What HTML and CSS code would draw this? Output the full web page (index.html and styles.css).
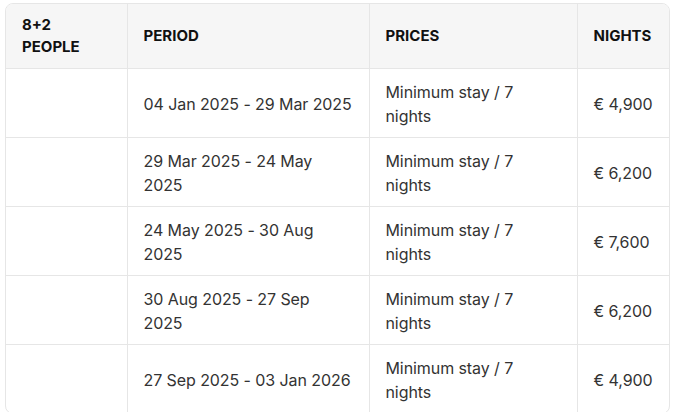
FILE: index.html
```html
<!DOCTYPE html>
<html lang="en">
<head>
<meta charset="utf-8">
<link rel="stylesheet" href="styles.css">
</head>
<body>
<div class="wrap">
<table class="rates">
<colgroup>
<col class="c1"><col class="c2"><col class="c3"><col class="c4">
</colgroup>
<thead>
<tr>
<th>8+2<br>PEOPLE</th>
<th>PERIOD</th>
<th>PRICES</th>
<th>NIGHTS</th>
</tr>
</thead>
<tbody>
<tr><td></td><td>04 Jan 2025 - 29 Mar 2025</td><td>Minimum stay / 7 nights</td><td class="price">€ 4,900</td></tr>
<tr><td></td><td>29 Mar 2025 - 24 May 2025</td><td>Minimum stay / 7 nights</td><td class="price">€ 6,200</td></tr>
<tr><td></td><td>24 May 2025 - 30 Aug 2025</td><td>Minimum stay / 7 nights</td><td class="price">€ 7,600</td></tr>
<tr><td></td><td>30 Aug 2025 - 27 Sep 2025</td><td>Minimum stay / 7 nights</td><td class="price">€ 6,200</td></tr>
<tr><td></td><td>27 Sep 2025 - 03 Jan 2026</td><td>Minimum stay / 7 nights</td><td class="price">€ 4,900</td></tr>
</tbody>
</table>
</div>
</body>
</html>
```
FILE: styles.css
```css
html, body { margin: 0; padding: 0; background: #fff; }
body { padding: 3px 0 0 5px; font-family: Inter, "Noto Sans", sans-serif; color: #222; }
.wrap {
  width: 663px;
  border: 1px solid #e6e6e6;
  border-radius: 8px;
  overflow: hidden;
}
.rates { width: 100%; border-collapse: collapse; table-layout: fixed; }
.rates th, .rates td {
  text-align: left;
  vertical-align: middle;
  padding: 10px 16px;
  border-left: 1px solid #e6e6e6;
  border-top: 1px solid #e6e6e6;
}
.rates th:first-child, .rates td:first-child { border-left: none; }
.rates thead th { border-top: none; }
.rates th {
  background: #f6f6f6;
  font-size: 15px;
  font-weight: 700;
  line-height: 22px;
  height: 44px;
  color: #111;
}
.rates td { font-size: 16px; letter-spacing: -0.08px; line-height: 24px; height: 48px; color: #333; padding-top: 11px; padding-bottom: 9px; }
.rates td.price { white-space: nowrap; }
.c1 { width: 121px; }
.c2 { width: 242px; }
.c3 { width: 208px; }
.c4 { width: auto; }
```
